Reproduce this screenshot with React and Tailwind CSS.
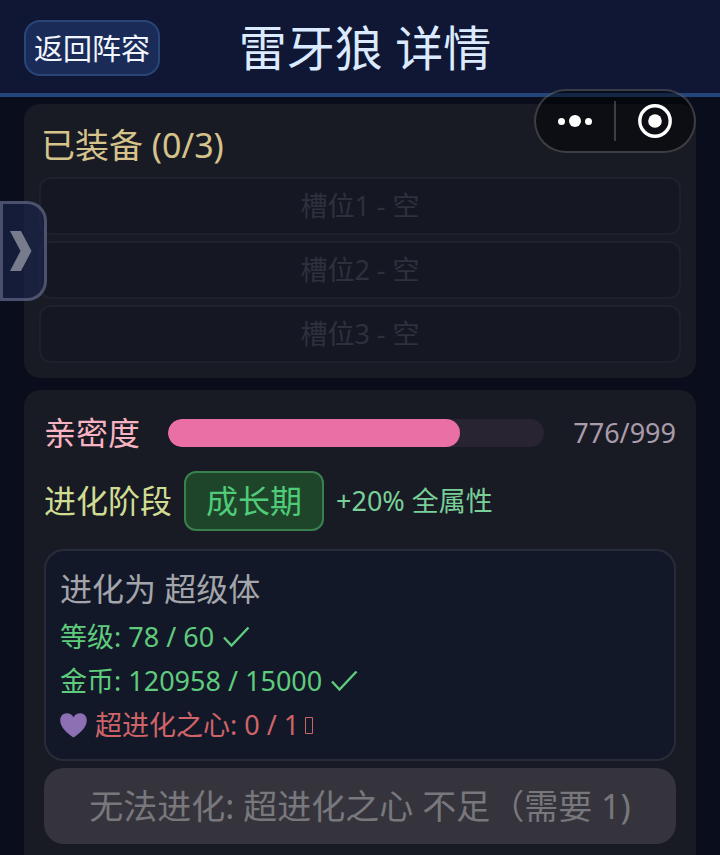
const slots = ["槽位1 - 空", "槽位2 - 空", "槽位3 - 空"];

const requirements = [
  { text: "等级: 78 / 60", met: true },
  { text: "金币: 120958 / 15000", met: true },
  { text: "超进化之心: 0 / 1", met: false, heart: true },
];

const affinity = { value: 776, max: 999 };

const CheckIcon = () => (
  <svg
    className="ml-2 h-6 w-7"
    viewBox="0 0 28 24"
    fill="none"
    stroke="currentColor"
    strokeWidth="2.400"
    aria-hidden="true"
  >
    <path d="M2 12.500 9.500 20.500 26.500 2.500" />
  </svg>
);

const MissingIcon = () => (
  <svg
    className="ml-1 h-6 w-3"
    viewBox="0 0 12 24"
    fill="none"
    stroke="currentColor"
    strokeWidth="1"
    aria-hidden="true"
  >
    <path d="M2.500 4.500h7v16h-7z" />
  </svg>
);

const HeartIcon = () => (
  <svg
    className="mr-2 h-7 w-[27px]"
    viewBox="0 0 27 28"
    fill="#8d70b3"
    aria-hidden="true"
  >
    <path d="M13.500 26.500C10 24 0.600 18 0.200 9.700 0 5.300 3 2.200 6.800 2.200c2.900 0 5.400 1.600 6.700 4 1.300-2.400 3.800-4 6.700-4 3.800 0 6.800 3.100 6.600 7.500C26.400 18 17 24 13.500 26.500z" />
  </svg>
);

const Header = () => (
  <header className="grid grid-cols-[1fr_auto_1fr] items-center border-b-4 border-[#24457a] bg-[#0f1735] pt-5 pr-3.5 pb-[17px] pl-6">
    <button
      type="button"
      className="h-14 justify-self-start rounded-2xl border-2 border-[#2a4677] bg-[#1a2b57] px-2 text-[29px] leading-none whitespace-nowrap text-[#f2f6ff]"
    >
      返回阵容
    </button>
    <h1 className="text-5xl leading-[56px] whitespace-nowrap text-[#dbeaff]">
      雷牙狼 详情
    </h1>
  </header>
);

const Capsule = () => (
  <div className="fixed top-[89px] right-6 z-20 flex h-16 w-[162px] items-center rounded-full border-2 border-white/20 bg-black/45">
    <button
      type="button"
      aria-label="更多"
      className="flex flex-1 items-center justify-center gap-1"
    >
      <span className="size-[7px] rounded-full bg-white" />
      <span className="size-3 rounded-full bg-white" />
      <span className="size-[7px] rounded-full bg-white" />
    </button>
    <span className="h-10 w-0.5 bg-white/20" />
    <button
      type="button"
      aria-label="关闭"
      className="flex flex-1 items-center justify-center"
    >
      <svg className="size-9" viewBox="0 0 36 36" aria-hidden="true">
        <circle
          cx="18"
          cy="18"
          r="15.200"
          fill="none"
          stroke="#fff"
          strokeWidth="3.400"
        />
        <circle cx="18" cy="18" r="6.800" fill="#fff" />
      </svg>
    </button>
  </div>
);

const DrawerHandle = () => (
  <button
    type="button"
    aria-label="展开"
    className="fixed top-[201px] left-0 z-20 flex h-[100px] w-[47px] items-center rounded-r-[20px] border-3 border-[#8c91aa]/45 bg-[#1c2650]/60 pl-[7px]"
  >
    <svg
      className="h-10 w-[22px]"
      viewBox="0 0 22 40"
      fill="#777b8b"
      aria-hidden="true"
    >
      <path d="M0 0h11l10.500 20L11 40H0l10.500-20z" />
    </svg>
  </button>
);

const Equipment = () => (
  <section className="rounded-2xl bg-[#181a24] px-[15px] pb-[15px]">
    <h2 className="px-0.5 pt-[17px] pb-2 text-[34px] leading-[48px] text-[#d5c38b]">
      已装备 (0/3)
    </h2>
    <ul className="flex flex-col gap-1.5">
      {slots.map((slot) => (
        <li
          key={slot}
          className="rounded-xl border-2 border-[#1e212b] bg-[#151822] text-center text-[27px] leading-[54px] text-[#2d313d]"
        >
          {slot}
        </li>
      ))}
    </ul>
  </section>
);

const Growth = () => (
  <section className="flex-1 rounded-t-2xl bg-[#181a24] px-5 pt-5">
    <div className="flex h-[46px] items-center">
      <span className="w-[124px] text-[32px] leading-[46px] text-[#f7b3c2]">
        亲密度
      </span>
      <div
        role="progressbar"
        aria-label="亲密度"
        aria-valuenow={affinity.value}
        aria-valuemax={affinity.max}
        className="h-7 flex-1 overflow-hidden rounded-full bg-[#292431]"
      >
        <div
          className="h-full rounded-full bg-[#ea6fa4]"
          style={{ width: `${(affinity.value / affinity.max) * 100}%` }}
        />
      </div>
      <span className="w-[132px] text-right text-[27px] leading-[46px] text-[#aa9bab]">
        {affinity.value}/{affinity.max}
      </span>
    </div>

    <div className="mt-[15px] flex items-center gap-3">
      <span className="text-[32px] leading-[60px] text-[#cfdd92]">
        进化阶段
      </span>
      <span className="rounded-xl border-2 border-[#39804f] bg-[#1e4529] px-5 text-[32px] leading-[56px] text-[#4fcb7a]">
        成长期
      </span>
      <span className="text-[27px] leading-[60px] text-[#78cf98]">
        +20% 全属性
      </span>
    </div>

    <div className="mt-[18px] rounded-[20px] border-2 border-[#282c3a] bg-[#121828] px-3.5 pt-4 pb-3">
      <h3 className="mb-1 text-[32px] leading-[44px] text-[#a3a5aa]">
        进化为 超级体
      </h3>
      <ul className="text-[27px] leading-[44px]">
        {requirements.map(({ text, met, heart }) => (
          <li
            key={text}
            className={`flex items-center ${met ? "text-[#5fcb7c]" : "text-[#cf6468]"}`}
          >
            {heart && <HeartIcon />}
            <span>{text}</span>
            {met ? <CheckIcon /> : <MissingIcon />}
          </li>
        ))}
      </ul>
    </div>

    <button
      type="button"
      disabled
      className="mt-[7px] mb-3 block w-full rounded-[20px] bg-[#35343d] text-[34px] leading-[76px] whitespace-nowrap text-[#78787c]"
    >
      无法进化: 超进化之心 不足（需要 1)
    </button>
  </section>
);

const App = () => {
  return (
    <div className="flex min-h-screen flex-col bg-[#0a0d1b] font-['Noto_Sans','Noto_Sans_CJK_SC',sans-serif]">
      <Header />
      <Capsule />
      <DrawerHandle />
      <main className="flex flex-1 flex-col gap-3 px-6 pt-[7px]">
        <Equipment />
        <Growth />
      </main>
    </div>
  );
};

export default App;
